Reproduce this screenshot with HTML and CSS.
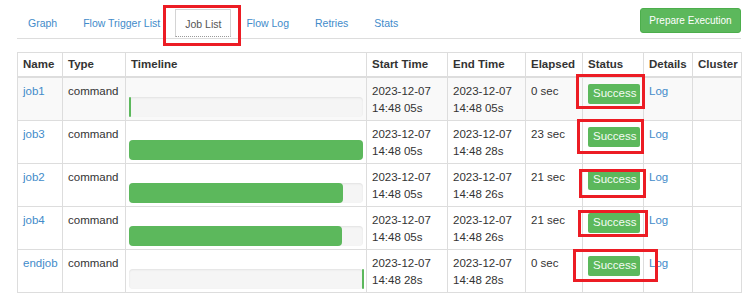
FILE: index.html
```html
<!DOCTYPE html>
<html>
<head>
<meta charset="utf-8">
<link rel="stylesheet" href="styles.css">
</head>
<body>
<div class="page">
  <div class="topbar">
    <ul class="tabs">
      <li class="tab"><a>Graph</a></li>
      <li class="tab"><a>Flow Trigger List</a></li>
      <li class="tab active"><a>Job List</a><span class="mark mark-tab"></span></li>
      <li class="tab"><a>Flow Log</a></li>
      <li class="tab"><a>Retries</a></li>
      <li class="tab"><a>Stats</a></li>
    </ul>
    <button class="btn-exec">Prepare Execution</button>
  </div>

  <table class="jobs">
    <colgroup>
      <col class="c-name"><col class="c-type"><col class="c-time"><col class="c-start"><col class="c-end"><col class="c-elapsed"><col class="c-status"><col class="c-details"><col class="c-cluster">
    </colgroup>
    <thead>
      <tr><th>Name</th><th>Type</th><th>Timeline</th><th>Start Time</th><th>End Time</th><th>Elapsed</th><th>Status</th><th>Details</th><th>Cluster</th></tr>
    </thead>
    <tbody>
      <tr class="hl">
        <td><a class="link">job1</a></td><td>command</td>
        <td class="tl"><div class="bar"><div class="fill" style="width:1%"></div></div></td>
        <td>2023-12-07<br>14:48 05s</td><td>2023-12-07<br>14:48 05s</td><td>0 sec</td>
        <td class="st"><span class="label">Success</span><span class="mark m1"></span></td>
        <td><a class="link">Log</a></td><td></td>
      </tr>
      <tr>
        <td><a class="link">job3</a></td><td>command</td>
        <td class="tl"><div class="bar"><div class="fill" style="width:100%"></div></div></td>
        <td>2023-12-07<br>14:48 05s</td><td>2023-12-07<br>14:48 28s</td><td>23 sec</td>
        <td class="st"><span class="label">Success</span><span class="mark m2"></span></td>
        <td><a class="link">Log</a></td><td></td>
      </tr>
      <tr>
        <td><a class="link">job2</a></td><td>command</td>
        <td class="tl"><div class="bar"><div class="fill" style="width:91.5%"></div></div></td>
        <td>2023-12-07<br>14:48 05s</td><td>2023-12-07<br>14:48 26s</td><td>21 sec</td>
        <td class="st"><span class="label">Success</span><span class="mark m3"></span></td>
        <td><a class="link">Log</a></td><td></td>
      </tr>
      <tr>
        <td><a class="link">job4</a></td><td>command</td>
        <td class="tl"><div class="bar"><div class="fill" style="width:91%"></div></div></td>
        <td>2023-12-07<br>14:48 05s</td><td>2023-12-07<br>14:48 26s</td><td>21 sec</td>
        <td class="st"><span class="label">Success</span><span class="mark m4"></span></td>
        <td><a class="link">Log</a></td><td></td>
      </tr>
      <tr>
        <td><a class="link">endjob</a></td><td>command</td>
        <td class="tl"><div class="bar"><div class="fill end" style="margin-left:calc(100% - 1px)"></div></div></td>
        <td>2023-12-07<br>14:48 28s</td><td>2023-12-07<br>14:48 28s</td><td>0 sec</td>
        <td class="st"><span class="label">Success</span><span class="mark m5"></span></td>
        <td><a class="link">Log</a></td><td></td>
      </tr>
    </tbody>
  </table>
</div>
</body>
</html>
```

FILE: styles.css
```css
html, body {
  margin: 0;
  padding: 0;
  background: #fff;
}
body {
  font-family: "Liberation Sans", Arial, sans-serif;
  font-size: 11.5px;
  color: #333;
}
.page {
  width: 724px;
  padding: 8px 0 0 17px;
}
.topbar {
  display: flex;
  align-items: flex-start;
  height: 30px;
  border-bottom: 1px solid #ddd;
}
.tabs {
  list-style: none;
  margin: 1px 0 0 0;
  padding: 0;
  display: flex;
}
.tab {
  position: relative;
  height: 28px;
  box-sizing: border-box;
  padding: 0 10px;
  margin-right: 4px;
  display: flex;
  align-items: center;
  font-size: 10.5px;
  color: #428bca;
  border: 1px solid transparent;
}
.tab a { cursor: pointer; }
.tab.active {
  color: #555;
  padding: 1px 9px 0;
  border: 1px solid #d4d4d4;
  border-bottom: 1px dotted #999;
}
.btn-exec {
  margin-left: auto;
  height: 25px;
  width: 101px;
  padding: 0;
  font-family: "Liberation Sans", Arial, sans-serif;
  font-size: 10px;
  color: #fff;
  background: #5cb85c;
  border: 1px solid #4cae4c;
  border-radius: 3px;
}
.jobs {
  margin-top: 13px;
  width: 724px;
  table-layout: fixed;
  border-collapse: collapse;
  border: 1px solid #ddd;
}
.c-name { width: 45px; }
.c-type { width: 63px; }
.c-time { width: 241px; }
.c-start { width: 81px; }
.c-end { width: 78px; }
.c-elapsed { width: 57px; }
.c-status { width: 61px; }
.c-details { width: 49px; }
.c-cluster { width: 49px; }
.jobs th {
  text-align: left;
  font-weight: bold;
  padding: 3px 5px 3px;
  line-height: 17px;
  border: 1px solid #ddd;
  border-bottom: 2px solid #ddd;
  white-space: nowrap;
}
.jobs td {
  vertical-align: top;
  padding: 5px 5px 3px;
  line-height: 17px;
  border: 1px solid #ddd;
  white-space: nowrap;
}
.jobs tr.hl td { background: #f9f9f9; }
.link { color: #428bca; cursor: pointer; }
.jobs td.tl { padding-left: 3px; padding-right: 3px; }
.bar {
  margin-top: 14px;
  height: 20px;
  border-radius: 4px;
  background: #f5f5f5;
  box-shadow: inset 0 1px 2px rgba(0,0,0,0.08);
  display: flex;
}
.fill {
  height: 20px;
  min-width: 2px;
  background: #5cb85c;
  border-radius: 4px;
}
.fill.end { width: 3px; border-radius: 1px; }
.st { position: relative; }
.label {
  display: inline-block;
  margin-top: 1px;
  padding: 1px 4px 2px 5px;
  line-height: 17px;
  font-size: 11.5px;
  color: #f4fbf4;
  background: #5cb85c;
  border-radius: 2px;
}
.mark {
  position: absolute;
  box-sizing: border-box;
  border: 3px solid #ec1c24;
  z-index: 2;
}
.mark-tab { left: -13px; top: -5px; width: 78px; height: 41px; }
.m1 { left: -7px; top: -4px; width: 69px; height: 35px; }
.m2 { left: -6px; top: -2px; width: 67px; height: 35px; }
.m3 { left: -4px; top: 5px; width: 67px; height: 29px; }
.m4 { left: -5px; top: 3px; width: 70px; height: 27px; }
.m5 { left: -10px; top: -1px; width: 85px; height: 33px; }
```
